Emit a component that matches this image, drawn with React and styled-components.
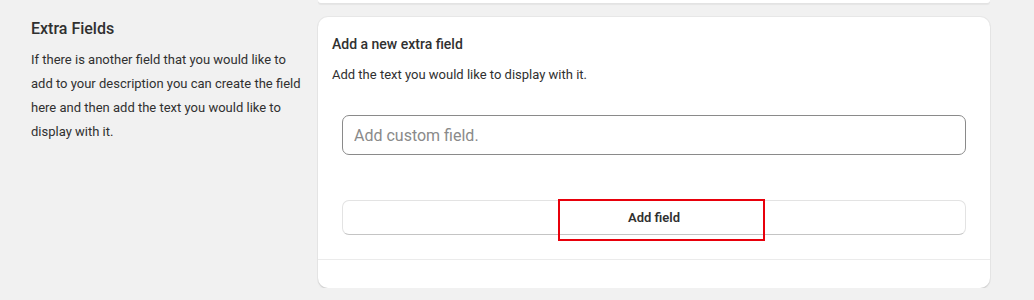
import React from "react";
import styled, { createGlobalStyle } from "styled-components";

const GlobalStyle = createGlobalStyle`
  body {
    margin: 0;
    background: #f1f1f1;
    font-family: Roboto, "Liberation Sans", sans-serif;
    color: #303030;
  }
`;

const App = () => {
  return (
    <>
      <GlobalStyle />
      <Page>
        <PrevCard />
        <Section>
          <Aside>
            <h2>Extra Fields</h2>
            <p>
              If there is another field that you would like to add to your
              description you can create the field here and then add the text
              you would like to display with it.
            </p>
          </Aside>
          <Card>
            <CardBody>
              <CardTitle>Add a new extra field</CardTitle>
              <CardText>Add the text you would like to display with it.</CardText>
              <Inner>
                <Input placeholder="Add custom field." />
                <ButtonWrap>
                  <Button>Add field</Button>
                  <Highlight />
                </ButtonWrap>
              </Inner>
            </CardBody>
            <CardFooter />
          </Card>
        </Section>
      </Page>
    </>
  );
};

export default App;

const Page = styled.div`
  padding: 0 44px 0 31px;
`;
const PrevCard = styled.div`
  height: 3px;
  margin-left: 287px;
  background: #fff;
  border-radius: 0 0 10px 10px;
  box-shadow: 0 1px 0 #e3e3e3, 0 2px 1px rgba(0, 0, 0, 0.05);
  margin-bottom: 14px;
`;
const Section = styled.div`
  display: grid;
  grid-template-columns: 270px 1fr;
  column-gap: 17px;
  align-items: start;
`;
const Aside = styled.div`
  > h2 {
    margin: 0;
    font-size: 16px;
    line-height: 24px;
    font-weight: 500;
    color: #303030;
  }
  > p {
    margin: 7px 0 0;
    font-size: 13px;
    line-height: 24px;
    color: #303030;
  }
`;
const Card = styled.div`
  background: #fff;
  border-radius: 10px;
  box-shadow: 0 0 0 1px rgba(0, 0, 0, 0.04), 0 1px 0 #dcdcdc,
    0 2px 2px rgba(0, 0, 0, 0.06);
  overflow: hidden;
`;
const CardBody = styled.div`
  padding: 17px 14px 24px;
`;
const CardTitle = styled.h3`
  margin: 0;
  font-size: 14px;
  line-height: 20px;
  font-weight: 500;
`;
const CardText = styled.p`
  margin: 11px 0 0;
  font-size: 13px;
  line-height: 20px;
`;
const Inner = styled.div`
  padding: 30px 10px 0;
  display: flex;
  flex-direction: column;
  gap: 45px;
`;
const Input = styled.input`
  box-sizing: border-box;
  height: 40px;
  width: 100%;
  border: 1px solid #8a8a8a;
  border-radius: 7px;
  padding: 0 11px;
  font: 16px Roboto, "Liberation Sans", sans-serif;
  color: #303030;
  outline: none;
  &::placeholder {
    color: #8a8a8a;
  }
`;
const ButtonWrap = styled.div`
  position: relative;
`;
const Button = styled.button`
  box-sizing: border-box;
  width: 100%;
  height: 35px;
  background: #fff;
  border: 1px solid #e3e3e3;
  border-bottom-color: #c4c4c4;
  border-radius: 7px;
  font: 600 13px Roboto, "Liberation Sans", sans-serif;
  color: #303030;
  cursor: pointer;
`;
const Highlight = styled.div`
  position: absolute;
  left: 216px;
  top: -1px;
  width: 207px;
  height: 42px;
  box-sizing: border-box;
  border: 2.5px solid #e8000b;
  pointer-events: none;
`;
const CardFooter = styled.div`
  height: 28px;
  border-top: 1px solid #ebebeb;
`;
